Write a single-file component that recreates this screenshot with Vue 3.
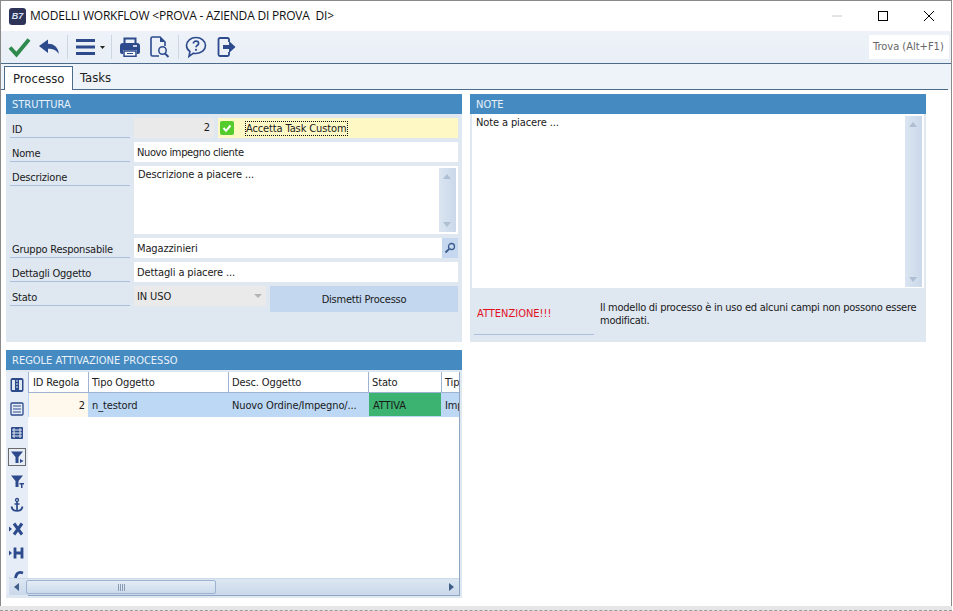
<script setup>
const cols = [
  { label: 'ID Regola', w: 60 },
  { label: 'Tipo Oggetto', w: 140 },
  { label: 'Desc. Oggetto', w: 140 },
  { label: 'Stato', w: 73 },
  { label: 'Tip', w: 18 },
]
const cells = [
  { t: '2', c: 'c-id', w: 59 },
  { t: 'n_testord', c: 'c-sel', w: 140 },
  { t: 'Nuovo Ordine/Impegno/...', c: 'c-sel', w: 141 },
  { t: 'ATTIVA', c: 'c-ok', w: 72 },
  { t: 'Imp', c: 'c-sel', w: 19 },
]
</script>

<template>
  <div class="root">
  <div class="win">
    <div class="title">
      <div class="logo"><span>B7</span></div>
      <div class="title-text">MODELLI WORKFLOW &lt;PROVA - AZIENDA DI PROVA&nbsp; DI&gt;</div>
      <div class="caps">
        <svg width="12" height="12" viewBox="0 0 12 12"><path d="M1 6h10" stroke="#c8c8c8" fill="none"/></svg>
        <svg width="12" height="12" viewBox="0 0 12 12"><rect x="1.5" y="1.5" width="9" height="9" stroke="#000" fill="none"/></svg>
        <svg width="12" height="12" viewBox="0 0 12 12"><path d="M1 1l10 10M11 1L1 11" stroke="#000" fill="none"/></svg>
      </div>
    </div>

    <div class="toolbar">
      <svg class="t first" width="24" height="24" viewBox="0 0 24 24"><path d="M3 12.500l6.500 7L22 4.500" stroke="#2f8a4e" stroke-width="3.800" fill="none"/></svg>
      <svg class="t" width="22" height="24" viewBox="0 0 22 24"><path d="M1 11L10 4.500v4.300c6 0 10 3.200 11 10.200-2.500-3.700-5.500-5.300-11-5.300v4.300z" fill="#2c4a8c"/></svg>
      <i class="sep"></i>
      <svg class="t" width="32" height="24" viewBox="0 0 32 24"><path d="M1 5.500h19M1 12h19M1 18.500h19" stroke="#2c4a8c" stroke-width="3" fill="none"/><path d="M25 11h5l-2.500 3z" fill="#222"/></svg>
      <i class="sep s4"></i>
      <svg class="t" width="22" height="24" viewBox="0 0 22 24"><path d="M5.500 8V3.500h11V8" fill="none" stroke="#2c4a8c" stroke-width="2"/><path d="M4 8h14a3 3 0 0 1 3 3v6a2 2 0 0 1-2 2h-1v-4H4v4H3a2 2 0 0 1-2-2v-6a3 3 0 0 1 3-3z" fill="#2c4a8c"/><path d="M5 16h12v5.200H5z" fill="#fff" stroke="#2c4a8c" stroke-width="1.500"/><path d="M8 18.500h6" stroke="#2c4a8c"/><path d="M14 11h4" stroke="#fff" stroke-width="1.500"/></svg>
      <svg class="t m8" width="21" height="24" viewBox="0 0 21 24"><path d="M10 21H3.500A1.500 1.500 0 0 1 2 19.500v-16A1.500 1.500 0 0 1 3.500 2H11l5 5v4" fill="none" stroke="#2c4a8c" stroke-width="1.600"/><path d="M11 2v5h5z" fill="#2c4a8c"/><circle cx="13.500" cy="15.500" r="3.700" fill="none" stroke="#2c4a8c" stroke-width="1.500"/><path d="M16 18.500l3.500 3.500" stroke="#2c4a8c" stroke-width="2"/></svg>
      <i class="sep s8"></i>
      <svg class="t m6" width="22" height="24" viewBox="0 0 22 24"><path d="M11 2.500c5.200 0 9.500 3.500 9.500 8s-4.300 8-9.500 8c-.9 0-1.700-.1-2.500-.3L4 21.500l.9-5C2.800 15 1.500 12.900 1.500 10.500c0-4.500 4.300-8 9.500-8z" fill="none" stroke="#2c4a8c" stroke-width="1.600"/><path d="M8.400 8.500c0-1.500 1.100-2.300 2.600-2.300s2.600.8 2.600 2.200c0 2-2.600 2-2.600 3.900" fill="none" stroke="#2c4a8c" stroke-width="1.700"/><circle cx="11" cy="14.800" r="1.100" fill="#2c4a8c"/></svg>
      <svg class="t m10" width="20" height="24" viewBox="0 0 20 24"><path d="M12 7V4.500A1.500 1.500 0 0 0 10.500 3H3a1.500 1.500 0 0 0-1.500 1.500v15A1.500 1.500 0 0 0 3 21h7.500a1.500 1.500 0 0 0 1.500-1.500V17" fill="none" stroke="#2c4a8c" stroke-width="1.800"/><path d="M6 10h6V6l6.500 6-6.500 6v-4H6z" fill="#2c4a8c"/></svg>
      <div class="search">Trova (Alt+F1)</div>
    </div>

    <div class="tabs">
      <div class="tab on">Processo</div>
      <div class="tab">Tasks</div>
    </div>

    <div class="page">
      <div class="col">
        <section class="panel p-top">
          <h2>STRUTTURA</h2>
          <div class="form">
            <label>ID</label>
            <div class="split">
              <div class="f id">2</div>
              <div class="f yellow">
                <span class="cb"><svg width="12" height="12" viewBox="0 0 12 12"><path d="M2.500 6l2.500 2.800L9.500 3.500" stroke="#fff" stroke-width="2" fill="none"/></svg></span>
                <span class="focus">Accetta Task Custom</span>
              </div>
            </div>
            <label>Nome</label>
            <div class="f tight">Nuovo impegno cliente</div>
            <label>Descrizione</label>
            <div class="f area">
              <span class="area-text">Descrizione a piacere ...</span>
              <div class="vbar"><b class="up"></b><b class="down"></b></div>
            </div>
            <label>Gruppo Responsabile</label>
            <div class="f lookup">
              <span>Magazzinieri</span>
              <span class="lens"><svg width="12" height="12" viewBox="0 0 12 12"><circle cx="7.500" cy="4.500" r="3" fill="none" stroke="#3b5a8c" stroke-width="1.300"/><path d="M5.200 6.800L1.500 10.500" stroke="#3b5a8c" stroke-width="1.800"/></svg></span>
            </div>
            <label>Dettagli Oggetto</label>
            <div class="f">Dettagli a piacere ...</div>
            <label>Stato</label>
            <div class="split2">
              <div class="f gray">IN USO<b class="drop"></b></div>
              <div class="btn">Dismetti Processo</div>
            </div>
          </div>
        </section>

        <section class="panel p-bottom">
          <h2>REGOLE ATTIVAZIONE PROCESSO</h2>
          <div class="dw">
            <div class="side">
              <svg width="16" height="16" viewBox="0 0 16 16"><rect x="1.500" y="1" width="13" height="14" rx="2" fill="#2c4a8c"/><path d="M3 3h3v10H3zM10 3h3v10h-3z" fill="#dfe7f1"/><path d="M7 4h2M7 7h2M7 10h2" stroke="#dfe7f1"/></svg>
              <svg width="16" height="16" viewBox="0 0 16 16"><rect x="2" y="2" width="12" height="12" rx="1" fill="none" stroke="#2c4a8c" stroke-width="1.300"/><path d="M4 5h8M4 8h8M4 11h8" stroke="#2c4a8c"/></svg>
              <svg width="16" height="16" viewBox="0 0 16 16"><rect x="2" y="2" width="12" height="12" rx="1" fill="#2c4a8c"/><path d="M3 5h10M3 8h10M3 11h10M5 3v10M11 3v10" stroke="#dfe7f1"/></svg>
              <div class="sel"><svg width="16" height="16" viewBox="0 0 16 16"><path d="M2 2.500h12L9.500 8v6h-3V8z" fill="#2c4a8c"/><path d="M11 10l3.500 2-3.500 2z" fill="#2c4a8c"/></svg></div>
              <svg width="16" height="16" viewBox="0 0 16 16"><path d="M2 2.500h12L9.500 8v6h-3V8z" fill="#2c4a8c"/><path d="M10.500 10h4.500v1.500h-1.500V15H12v-3.500h-1.500z" fill="#2c4a8c"/></svg>
              <svg width="16" height="16" viewBox="0 0 16 16"><circle cx="8" cy="3" r="1.500" fill="none" stroke="#2c4a8c" stroke-width="1.300"/><path d="M8 4.500V14M5.500 7h5M2.500 9.500c.5 3 3 4.500 5.500 4.500s5-1.500 5.500-4.500" fill="none" stroke="#2c4a8c" stroke-width="1.700"/></svg>
              <svg width="16" height="16" viewBox="0 0 16 16"><path d="M5 2.500l8 11M13 2.500l-8 11" stroke="#2c4a8c" stroke-width="3" fill="none"/><path d="M0 5.500l3 2.500-3 2.500z" fill="#2c4a8c"/></svg>
              <svg width="16" height="16" viewBox="0 0 16 16"><path d="M6 2.500v11M13 2.500v11M6 8h7" stroke="#2c4a8c" stroke-width="2.800" fill="none"/><path d="M0 5.500l3 2.500-3 2.500z" fill="#2c4a8c"/></svg>
              <svg class="last" width="16" height="16" viewBox="0 0 16 16"><path d="M14 4C9 2 6.500 5 6.500 11" stroke="#2c4a8c" stroke-width="2.800" fill="none"/><path d="M0 8.500l3 2.500-3 2.500z" fill="#2c4a8c"/></svg>
              <div class="corner"></div>
            </div>
            <div class="grid">
              <div class="rows">
                <div class="gh">
                  <div v-for="c in cols" :key="c.label" class="hc" :style="{ width: c.w + 'px' }">{{ c.label }}</div>
                </div>
                <div class="gr">
                  <div v-for="c in cells" :key="c.t" class="rc" :class="c.c" :style="{ width: c.w + 'px' }">{{ c.t }}</div>
                </div>
              </div>
              <div class="hbar">
                <b class="left"></b>
                <div class="thumb"><i></i><i></i><i></i><i></i></div>
                <b class="right"></b>
              </div>
            </div>
          </div>
        </section>
      </div>

      <section class="panel note">
        <h2>NOTE</h2>
        <div class="note-area">
          <span>Note a piacere ...</span>
          <div class="vbar"><b class="up"></b><b class="down"></b></div>
        </div>
        <div class="warn">
          <div class="warn-l">ATTENZIONE!!!</div>
          <div class="warn-t">Il modello di processo è in uso ed alcuni campi non possono essere modificati.</div>
        </div>
      </section>
    </div>
  </div>
  <div class="foot"></div>
  </div>
</template>

<style>
html, body { margin: 0; background: #fff; overflow: hidden; }
</style>

<style scoped>
.win {
  width: 952px; height: 606px; box-sizing: border-box;
  border-left: 1px solid #8a8a8a; border-top: 1px solid #8a8a8a; border-right: 1px solid #8a8a8a;
  font: 11px/14px Tahoma, "DejaVu Sans Condensed", "Noto Sans", sans-serif; color: #1a1a1a;
  letter-spacing: -0.12px;
  display: flex; flex-direction: column; background: #fff;
}
.title { height: 30px; display: flex; align-items: center; flex: none; }
.logo { width: 17px; height: 17px; margin-left: 8px; margin-right: 4px; border-radius: 3px; background: #2e3358; color: #d7e2f7; font: italic bold 9px/17px "Liberation Sans", sans-serif; text-align: center; }
.title-text { font: 12px/16px "Open Sans", "Noto Sans", sans-serif; letter-spacing: -0.2px; color: #111; white-space: nowrap; }
.caps { margin-left: auto; display: flex; gap: 34px; padding-right: 16px; }
.toolbar { height: 33px; flex: none; box-sizing: border-box; border-bottom: 1px solid #4d6c8c; background: linear-gradient(#eef2f8, #e9eff7); display: flex; align-items: center; padding-left: 6px; }
.t { margin-left: 7px; flex: none; }
.t.first { margin-left: 0; }
.t.m6 { margin-left: 6px; }
.t.m8 { margin-left: 8px; }
.t.m10 { margin-left: 10px; }
.sep { width: 1px; height: 24px; background: #ccd5e0; margin-left: 7px; flex: none; }
.sep.s4 { margin-left: 4px; }
.sep.s8 { margin-left: 8px; }
.search { margin-left: auto; margin-right: 2px; width: 80px; height: 24px; background: #fff; color: #666; line-height: 24px; padding-left: 4px; box-sizing: border-box; font-size: 11px; letter-spacing: 0; white-space: nowrap; }
.tabs { height: 26px; flex: none; box-sizing: border-box; background: linear-gradient(#4d6c8c, #4d6c8c) no-repeat left bottom / 947px 1px, #eef2f9; display: flex; padding: 2px 0 0 3px; }
.tab { padding: 4px 7px 0; font-size: 13px; line-height: 16px; color: #222; letter-spacing: 0; }
.tab.on { background: #fff; border: 1px solid #4d6c8c; border-bottom: 0; height: 24px; box-sizing: border-box; width: 69px; padding-left: 8px; }
.page { flex: 1; display: flex; gap: 8px; padding: 4px 0 0 5px; min-height: 0; align-items: flex-start; }
.col { display: flex; flex-direction: column; gap: 8px; width: 456px; }
.panel { background: #dfe7f1; width: 456px; }
.panel h2 { margin: 0; height: 20px; background: #458bc2; color: #e9f1f9; font-weight: 400; font-size: 11px; line-height: 22px; padding-left: 6px; letter-spacing: 0; }
.p-top { height: 248px; }
.p-bottom { height: 248px; display: flex; flex-direction: column; }
.form { display: grid; grid-template-columns: 120px 324px; column-gap: 4px; row-gap: 4px; padding: 4px 0 0 4px; grid-template-rows: 20px 20px 68px 20px 20px 26px; }
label { display: block; border-bottom: 1px solid #a9bfdc; padding: 4px 0 0 2px; height: 15px; line-height: 15px; letter-spacing: -0.22px; }
.f { background: #fff; height: 20px; line-height: 21px; padding-left: 3px; box-sizing: border-box; white-space: nowrap; }
.f.tight { letter-spacing: -0.38px; }
.split { display: flex; gap: 4px; }
.f.id { width: 80px; background: #eaeaea; text-align: right; padding: 0 4px 0 0; line-height: 20px; }
.f.yellow { flex: 1; background: #fdf8c4; display: flex; align-items: center; padding-left: 2px; }
.cb { width: 14px; height: 14px; background: #55cc2e; border-radius: 2px; display: flex; align-items: center; justify-content: center; margin-right: 12px; }
.focus { outline: 1px dotted #111; line-height: 13px; padding: 0 1px 0 0; }
.area { height: 68px; padding: 1px 0 0 4px; line-height: 14px; display: flex; justify-content: space-between; }
.area-text { margin-top: 1px; }
.vbar { width: 17px; background: linear-gradient(90deg, #dbe5f1, #c9d8ea); position: relative; }
.area .vbar { height: 64px; margin: 1px 2px 0 0; }
.vbar .up, .vbar .down { position: absolute; left: 4px; width: 0; height: 0; border-left: 4px solid transparent; border-right: 4px solid transparent; }
.vbar .up { top: 6px; border-bottom: 5px solid #aebfd4; }
.vbar .down { bottom: 5px; border-top: 5px solid #aebfd4; }
.lookup { display: flex; justify-content: space-between; padding-right: 0; }
.lens { width: 16px; height: 20px; background: #c5d8ef; display: flex; align-items: center; justify-content: center; }
.split2 { display: flex; gap: 4px; align-items: flex-start; }
.f.gray { width: 132px; background: #eaeaea; position: relative; padding-left: 3px; }
.drop { position: absolute; right: 4px; top: 8px; width: 0; height: 0; border-left: 4px solid transparent; border-right: 4px solid transparent; border-top: 4px solid #b5b5b5; }
.btn { flex: 1; height: 26px; background: #c3d7ef; line-height: 27px; text-align: center; letter-spacing: -0.22px; }
.note { height: 248px; display: flex; flex-direction: column; }
.note-area { margin: 0 2px 0 2px; height: 174px; background: #fff; display: flex; justify-content: space-between; padding: 2px 2px 1px 4px; box-sizing: border-box; flex: none; }
.warn { flex: 1; display: flex; padding-left: 4px; }
.warn-l { width: 120px; height: 47px; box-sizing: border-box; border-bottom: 1px solid #a9bfdc; color: #e3101e; padding: 19px 0 0 3px; letter-spacing: 0; }
.warn-t { width: 330px; padding: 13px 0 0 6px; line-height: 13px; letter-spacing: -0.25px; box-sizing: border-box; }
.dw { flex: 1; display: flex; min-height: 0; padding-top: 2px; }
.side { width: 22px; flex: none; display: flex; flex-direction: column; align-items: center; gap: 8px; padding: 5px 0 0; position: relative; overflow: hidden; height: 223px; box-sizing: border-box; background: #e6edf6; }
.side svg { flex: none; }
.sel { width: 18px; height: 18px; border: 1px solid #6a6a6a; display: flex; align-items: center; justify-content: center; box-sizing: border-box; margin: -1px 0; }
.corner { position: absolute; left: 3px; bottom: 0; width: 19px; height: 17px; background: #dfe7f1; }
.grid { width: 432px; height: 224px; box-sizing: border-box; border: 1px solid #8ea5c4; border-left: 0; border-top: 0; background: #fff; display: flex; flex-direction: column; }
.rows { flex: 1; min-height: 0; overflow: hidden; }
.gh { display: flex; height: 21px; box-sizing: border-box; border-bottom: 1px solid #9db3cf; }
.hc { flex: none; box-sizing: border-box; border-left: 1px solid #9db3cf; padding: 4px 0 0 3px; white-space: nowrap; overflow: hidden; }
.hc:first-child { padding-left: 4px; }
.gr { display: flex; height: 24px; background: #bcd8f5; }
.rc { flex: none; box-sizing: border-box; padding: 6px 0 0 4px; white-space: nowrap; overflow: hidden; }
.c-id { background: #fff8ec; text-align: right; padding-right: 3px; margin-left: 1px; }
.c-ok { background: #3cb371; margin-bottom: 1px; }
.hbar { height: 17px; flex: none; background: linear-gradient(#dde7f2, #c9d8ea); position: relative; border-top: 1px solid #ccd9e9; box-sizing: border-box; margin-left: -19px; }
.hbar .left, .hbar .right { position: absolute; top: 4px; width: 0; height: 0; border-top: 4px solid transparent; border-bottom: 4px solid transparent; }
.hbar .left { left: 5px; border-right: 5px solid #3f5f88; }
.hbar .right { right: 5px; border-left: 5px solid #3f5f88; }
.thumb { position: absolute; left: 17px; top: 1px; width: 190px; height: 14px; box-sizing: border-box; border: 1px solid #9db3cf; border-radius: 2px; background: linear-gradient(#e4edf6, #ccdbec); display: flex; align-items: center; justify-content: center; gap: 1px; }
.thumb i { width: 1px; height: 7px; background: #8a9db5; }
.foot { height: 5px; width: 952px; box-sizing: border-box; background: #e6e6e6; border-bottom: 1px dashed #999; }
</style>
